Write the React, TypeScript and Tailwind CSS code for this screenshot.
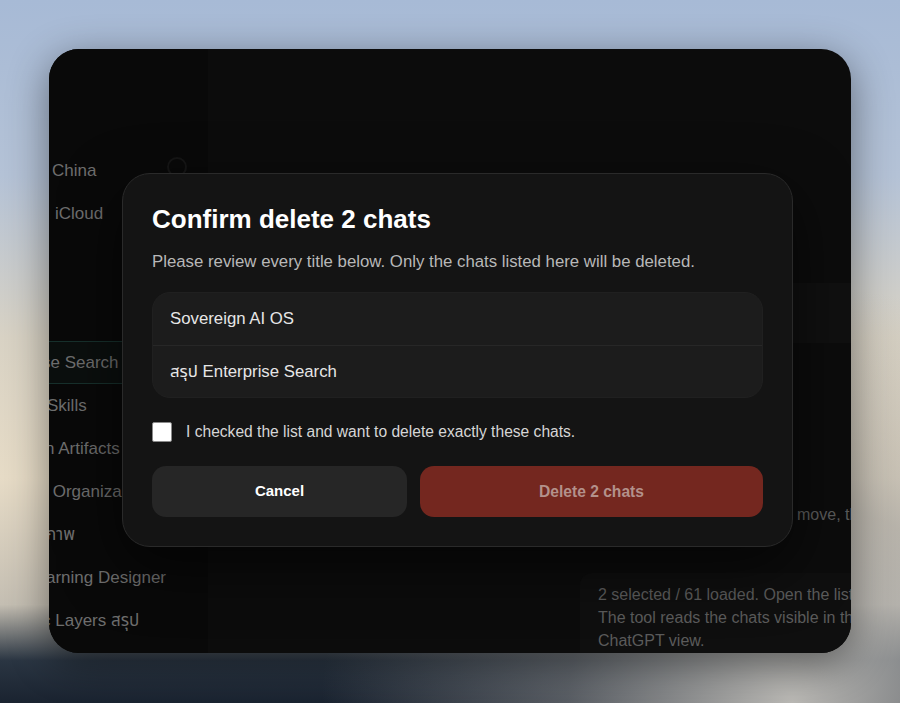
import { useState } from 'react';

const font = { fontFamily: '"Liberation Sans", "Noto Sans Thai", "Noto Sans", Arial, sans-serif' };

const sidebarItems = [
  { label: 'Skills', shift: '-ml-[2px]' },
  { label: 'n Artifacts', shift: '-ml-[4px]' },
  { label: ' Organiza', shift: '-ml-[1px]' },
  { label: 'ภาพ', shift: '-ml-[3px]' },
  { label: 'arning Designer', shift: '-ml-[3px]' },
  { label: 'c Layers สรุป', shift: '-ml-[7px]' },
];

const chats = ['Sovereign AI OS', 'สรุป Enterprise Search'];

const ConfirmDialog = () => {
  const [checked, setChecked] = useState(false);

  return (
    <div className="absolute left-[73px] top-[124px] w-[671px] rounded-[28px] border border-[#2a2a2a] bg-[#141414] p-[29px] shadow-[0_20px_60px_rgba(0,0,0,0.6)]">
      <h2 className="text-[26px] font-bold leading-8 text-white">Confirm delete 2 chats</h2>
      <p className="mt-[15px] text-[16.8px] leading-6 text-[#b8b8b8]">
        Please review every title below. Only the chats listed here will be deleted.
      </p>
      <div className="mt-[18px] overflow-hidden rounded-[18px] border border-[#202020] bg-[#1c1c1c]">
        {chats.map((c, i) => (
          <div
            key={c}
            className={`flex h-[52px] items-center px-[17px] text-[16.8px] text-[#e6e6e6] ${i > 0 ? 'border-t border-[#272727]' : ''}`}
          >
            {c}
          </div>
        ))}
      </div>
      <label className="mt-[23px] flex h-[21px] cursor-pointer items-center">
        <span
          onClick={() => setChecked(!checked)}
          className="h-[20px] w-[20px] rounded-[2px] border border-[#8a8a8a] bg-white"
        />
        <span className="ml-[14px] text-[15.6px] text-[#d6d6d6]">
          I checked the list and want to delete exactly these chats.
        </span>
      </label>
      <div className="mt-[24px] grid grid-cols-[255px_1fr] gap-[13px]">
        <button className="h-[51px] rounded-[14px] bg-[#262626] text-[15px] font-bold text-white">Cancel</button>
        <button disabled className="h-[51px] rounded-[14px] bg-[#74271f] text-[15.6px] font-bold text-[#b3918b]">
          Delete 2 chats
        </button>
      </div>
    </div>
  );
};

export default function App() {
  return (
    <div
      style={font}
      className="relative h-[703px] w-[900px] overflow-hidden bg-[radial-gradient(ellipse_at_88%_100%,rgba(195,193,188,0.95)_0%,rgba(150,150,150,0.5)_20%,transparent_42%),linear-gradient(180deg,#a7bad6_0%,#b4c2d6_25%,#d8d2c4_48%,#e6dbc6_68%,#c4beb2_86%,#2a3542_94%,#1a2330_100%)] px-[49px] pt-[49px]"
    >
      <div className="relative flex h-[604px] w-[802px] overflow-hidden rounded-[30px] bg-[#0c0c0c] shadow-[0_10px_40px_rgba(0,0,0,0.45)]">
        {/* sidebar */}
        <aside className="flex w-[159px] flex-col whitespace-nowrap bg-[#090909] pt-[100px] text-[17px] text-[#6e6e6e]">
          <div className="flex h-[43px] items-center justify-between pl-[3px] pr-[21px]">
            <span>China</span>
            <span className="mb-[8px] h-[20px] w-[20px] rounded-full border-2 border-[#161616]" />
          </div>
          <div className="flex h-[43px] items-center pl-[6px]">iCloud</div>
          <div className="h-[106px]" />
          <div className="-ml-[4px] flex h-[43px] items-center rounded-r-lg border-y border-r border-[#17302c] bg-[#0b0f0e]">
            <span className="-ml-[3px]">se Search</span>
          </div>
          {sidebarItems.map((it) => (
            <div key={it.label} className="flex h-[43px] items-center overflow-hidden">
              <span className={`whitespace-pre ${it.shift}`}>{it.label}</span>
            </div>
          ))}
        </aside>

        {/* main */}
        <main className="flex flex-1">
          <div className="flex-1" />
          <section className="flex w-[271px] flex-col whitespace-nowrap pt-[234px] text-[16px] text-[#5b5b5b]">
            <div className="h-[60px] rounded-l-xl bg-[#101010]" />
            <div className="mt-[161px] h-[22px] pl-[217px] leading-[22px]">move, then confirm</div>
            <div className="mt-[47px] flex-1 overflow-hidden rounded-tl-xl bg-[#0f0f0f] px-[18px] pt-[10px] leading-[23px]">
              <div>2 selected / 61 loaded. Open the list to review.</div>
              <div>The tool reads the chats visible in the sidebar</div>
              <div>ChatGPT view.</div>
            </div>
          </section>
        </main>

        <ConfirmDialog />
      </div>
    </div>
  );
}
